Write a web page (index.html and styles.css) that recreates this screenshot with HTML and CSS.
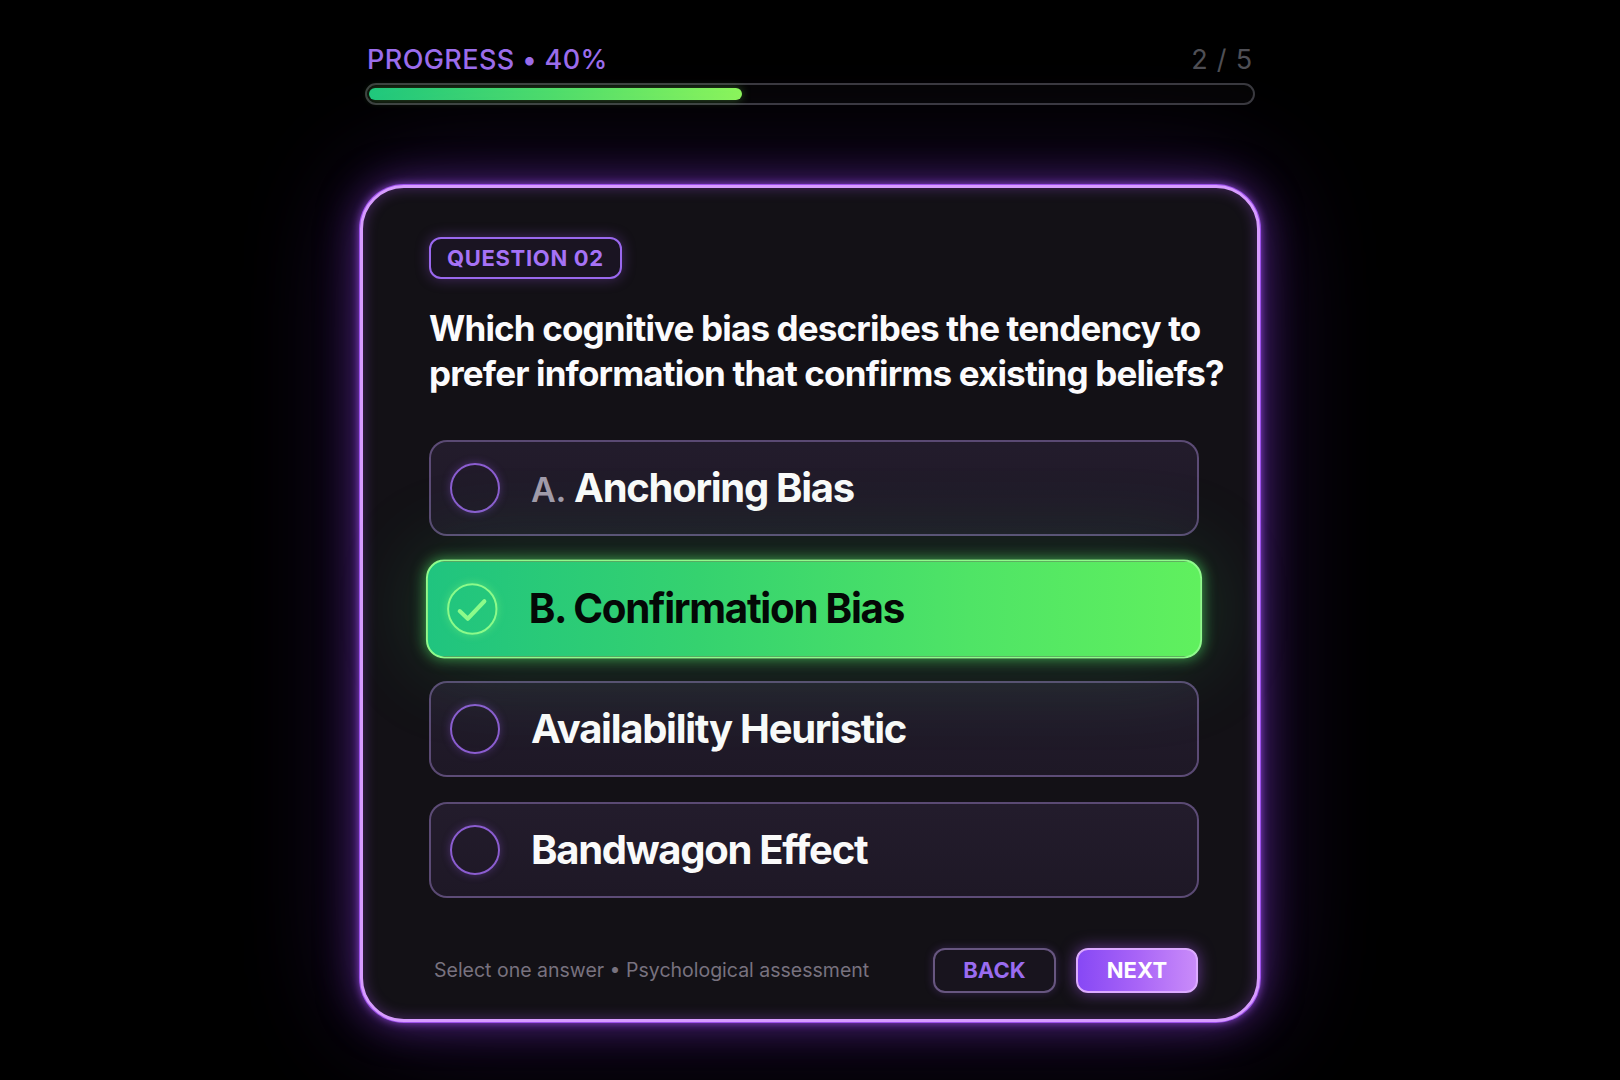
FILE: index.html
```html
<!DOCTYPE html>
<html lang="en">
<head>
<meta charset="utf-8">
<title>Quiz – Question 02</title>
<link rel="stylesheet" href="styles.css">
</head>
<body>
<main class="page">
  <section class="progress">
    <div class="progress-head">
      <span class="progress-label">PROGRESS • 40%</span>
      <span class="progress-count">2 / 5</span>
    </div>
    <div class="track"><div class="fill" style="width:42.3%"></div></div>
  </section>

  <section class="card">
    <div class="badge">QUESTION 02</div>
    <h1 class="question">Which cognitive bias describes the tendency to prefer information that confirms existing beliefs?</h1>

    <div class="options">
      <div class="option">
        <span class="radio"></span>
        <span class="opt-text"><span class="opt-letter">A.</span> Anchoring Bias</span>
      </div>
      <div class="option selected">
        <span class="radio checked">
          <svg viewBox="0 0 50 50" width="50" height="50"><path d="M12.5 27 L20.5 34.5 L37 17.5" fill="none" stroke="#8cfb8a" stroke-width="4" stroke-linecap="round" stroke-linejoin="round"/></svg>
        </span>
        <span class="opt-text">B. Confirmation Bias</span>
      </div>
      <div class="option">
        <span class="radio"></span>
        <span class="opt-text">Availability Heuristic</span>
      </div>
      <div class="option">
        <span class="radio"></span>
        <span class="opt-text">Bandwagon Effect</span>
      </div>
    </div>

    <footer class="card-foot">
      <span class="hint">Select one answer • Psychological assessment</span>
      <div class="actions">
        <button class="btn btn-back">BACK</button>
        <button class="btn btn-next">NEXT</button>
      </div>
    </footer>
  </section>
</main>
</body>
</html>
```

FILE: styles.css
```css
* { box-sizing: border-box; }

html, body {
  margin: 0;
  padding: 0;
  background: #000;
}

body {
  width: 1620px;
  height: 1080px;
  overflow: hidden;
  font-family: Inter, "Noto Sans", "Liberation Sans", sans-serif;
  color: #fff;
  background:
    radial-gradient(ellipse 560px 520px at 810px 600px, rgba(70, 30, 110, 0.22), rgba(0,0,0,0) 70%),
    #000;
}

.page {
  display: flex;
  flex-direction: column;
  align-items: center;
  padding-top: 44px;
}

/* progress */
.progress {
  width: 890px;
  flex: none;
}

.progress-head {
  display: flex;
  justify-content: space-between;
  align-items: baseline;
  padding: 0 2px;
  line-height: 32px;
}

.progress-label {
  font-size: 27px;
  font-weight: 500;
  letter-spacing: 0.015em;
  color: #9b6deb;
}

.progress-count {
  font-size: 27px;
  font-weight: 400;
  letter-spacing: 0.03em;
  color: #4f4f55;
}

.track {
  margin-top: 7px;
  height: 22px;
  border: 2px solid #3a3a3f;
  border-radius: 11px;
  background: #050505;
  padding: 3px 2px;
}

.fill {
  height: 100%;
  border-radius: 7px;
  background: linear-gradient(90deg, #1fc97c 0%, #4fe06a 50%, #8cf85a 100%);
  box-shadow: 0 0 10px rgba(120, 240, 90, 0.35);
}

/* card */
.card {
  flex: none;
  margin-top: 80px;
  width: 900px;
  height: 837px;
  border: 3px solid #d79cff;
  border-radius: 44px;
  background: #131116;
  padding: 49px 58px 25px 66px;
  display: flex;
  flex-direction: column;
  box-shadow:
    0 0 0 1px rgba(165, 85, 247, 0.9),
    0 0 10px rgba(168, 85, 247, 0.85),
    0 0 40px rgba(150, 70, 240, 0.5),
    0 0 120px rgba(120, 50, 210, 0.3),
    inset 0 0 14px rgba(168, 85, 247, 0.35);
}

.card > * { flex: none; }

.badge {
  align-self: flex-start;
  height: 42px;
  padding: 0 16px;
  display: flex;
  align-items: center;
  border: 2px solid #9a68ee;
  border-radius: 12px;
  background: #1a1422;
  color: #a672f6;
  font-size: 22px;
  font-weight: 700;
  letter-spacing: 0.03em;
  box-shadow: 0 0 14px rgba(160, 90, 240, 0.35);
}

.question {
  margin: 27px -60px 0 0;
  font-size: 35px;
  line-height: 45px;
  font-weight: 700;
  letter-spacing: -0.024em;
  color: #fbfbfd;
}

.options {
  margin-top: 44px;
  display: flex;
  flex-direction: column;
  gap: 24.5px;
  width: 770px;
}

.option {
  flex: none;
  height: 96px;
  border: 2px solid rgba(165, 135, 210, 0.45);
  border-radius: 18px;
  background: linear-gradient(180deg, #231c2c 0%, #1e1826 100%);
  display: flex;
  align-items: center;
  padding-left: 19px;
  gap: 31px;
}

.radio {
  flex: none;
  width: 50px;
  height: 50px;
  border-radius: 50%;
  border: 2px solid #8b5dd0;
  box-shadow: 0 0 8px rgba(150, 90, 230, 0.35);
  display: flex;
  align-items: center;
  justify-content: center;
}

.radio svg {
  display: block;
  margin: -2px;
}

.opt-text {
  font-size: 40px;
  font-weight: 700;
  letter-spacing: -0.032em;
  color: #fafafa;
  line-height: 1;
}

.opt-letter {
  font-size: 34px;
  font-weight: 600;
  letter-spacing: -0.01em;
  color: #a29bab;
}

.option.selected {
  transform: scale(1.008, 1.03);
  border: 2px solid #8ffb8c;
  background: linear-gradient(90deg, #20c47f 0%, #35d26f 35%, #4fe466 70%, #60f05e 100%);
  box-shadow:
    0 0 14px rgba(90, 250, 110, 0.55),
    0 0 90px rgba(60, 220, 110, 0.22);
}

.option.selected .opt-text {
  color: #040806;
}

.radio.checked {
  border-color: #8cfb8a;
  box-shadow: 0 0 8px rgba(140, 250, 130, 0.4);
}

/* footer */
.card-foot {
  margin-top: 50px;
  width: 770px;
  display: flex;
  align-items: center;
  justify-content: space-between;
}

.hint {
  padding-left: 5px;
  font-size: 19.5px;
  color: #78727f;
}

.actions {
  display: flex;
  gap: 20px;
  padding-right: 1px;
}

.btn {
  height: 45px;
  border-radius: 12px;
  font-family: Inter, "Noto Sans", "Liberation Sans", sans-serif;
  font-size: 22px;
  font-weight: 700;
  letter-spacing: 0.005em;
  display: flex;
  align-items: center;
  justify-content: center;
  cursor: pointer;
}

.btn-back {
  width: 123px;
  border: 2px solid rgba(170, 140, 210, 0.55);
  background: #18141e;
  color: #9a6cf0;
  box-shadow: 0 0 8px rgba(150, 90, 230, 0.25);
}

.btn-next {
  width: 122px;
  border: 2px solid #dcaaff;
  background: linear-gradient(90deg, #8748f5 0%, #a864f7 50%, #c98bf9 100%);
  color: #fff;
  box-shadow: 0 0 16px rgba(170, 90, 245, 0.55);
}
```
